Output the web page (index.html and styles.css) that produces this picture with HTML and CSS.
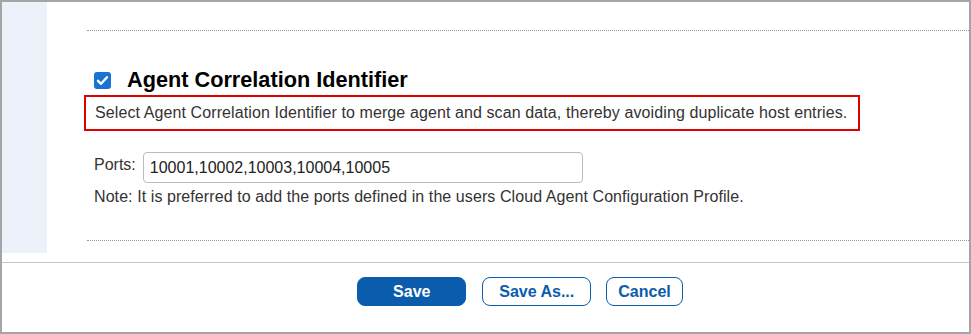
FILE: index.html
```html
<!DOCTYPE html>
<html>
<head>
<meta charset="utf-8">
<link rel="stylesheet" href="styles.css">
</head>
<body>
<div class="frame">
  <div class="upper">
    <div class="sidebar"></div>
    <div class="content">
      <div class="section">
        <div class="heading-row">
          <span class="checkbox">
            <svg width="17" height="17" viewBox="0 0 17 17"><path d="M4 8.8 L7 11.8 L13 5.2" fill="none" stroke="#fff" stroke-width="2.4" stroke-linecap="round" stroke-linejoin="round"/></svg>
          </span>
          <h2 class="heading">Agent Correlation Identifier</h2>
        </div>
        <div class="desc">Select Agent Correlation Identifier to merge agent and scan data, thereby avoiding duplicate host entries.</div>
        <div class="ports-row">
          <label class="ports-label">Ports:</label>
          <input class="ports-input" type="text" value="10001,10002,10003,10004,10005">
        </div>
        <div class="note">Note: It is preferred to add the ports defined in the users Cloud Agent Configuration Profile.</div>
      </div>
    </div>
  </div>
  <div class="footer">
    <button class="btn btn-primary">Save</button>
    <button class="btn btn-outline">Save As...</button>
    <button class="btn btn-outline btn-cancel">Cancel</button>
  </div>
</div>
</body>
</html>
```
FILE: styles.css
```css
* { box-sizing: border-box; }
html, body { margin: 0; padding: 0; background: #fff; }
body { font-family: "Liberation Sans", Arial, sans-serif; color: #333; }

.frame {
  width: 971px;
  height: 334px;
  border: 2px solid #a5a5a5;
  display: flex;
  flex-direction: column;
}

.upper {
  display: flex;
  height: 260px;
}

.sidebar {
  width: 45px;
  height: 251px;
  background: #edf2fa;
  flex: none;
}

.content {
  flex: 1;
  padding: 28px 0 0 40px;
}

.section {
  border-top: 1px dotted #999;
  border-bottom: 1px dotted #999;
  padding: 37px 0 34px 7px;
}

.heading-row {
  display: flex;
  align-items: center;
  height: 24px;
}

.checkbox {
  width: 17px;
  height: 17px;
  border-radius: 3px;
  background: #1873d3;
  display: flex;
  margin-right: 16px;
  flex: none;
}

.heading {
  margin: 0;
  font-size: 21.7px;
  line-height: 24px;
  font-weight: bold;
  color: #000;
}

.desc {
  display: inline-block;
  margin: 3px 0 0 -10px;
  border: 2px solid #e00000;
  padding: 6px 11px 6px 9px;
  font-size: 16px;
  line-height: 20px;
  letter-spacing: 0.1px;
  color: #333;
  white-space: nowrap;
}

.ports-row {
  display: flex;
  align-items: flex-start;
  margin-top: 21px;
}

.ports-label {
  font-size: 16px;
  line-height: 18px;
  padding-top: 4px;
  margin-right: 7px;
  color: #333;
}

.ports-input {
  width: 440px;
  height: 31px;
  border: 1px solid #bbb;
  border-radius: 4px;
  padding: 0 6px;
  font-family: "Liberation Sans", Arial, sans-serif;
  font-size: 16px;
  color: #222;
  margin: 0;
  outline: none;
}

.note {
  margin-top: 5px;
  font-size: 16px;
  line-height: 18px;
  letter-spacing: 0.08px;
  color: #333;
}

.footer {
  flex: 1;
  border-top: 1px solid #c8c8c8;
  display: flex;
  justify-content: center;
  align-items: flex-start;
  gap: 16px;
  padding: 14px 0 0 69px;
}

.btn {
  height: 29px;
  border-radius: 8px;
  font-family: "Liberation Sans", Arial, sans-serif;
  font-size: 16px;
  font-weight: bold;
  padding: 0 16px;
  cursor: pointer;
  margin: 0;
}

.btn-primary {
  width: 109px;
  background: #0b5cad;
  border: 1px solid #0b5cad;
  color: #fff;
}

.btn-outline {
  background: #fff;
  border: 1px solid #0b5cad;
  color: #0b5cad;
}

.btn-cancel {
  padding: 0 11px;
  margin-left: -1px;
}
```
